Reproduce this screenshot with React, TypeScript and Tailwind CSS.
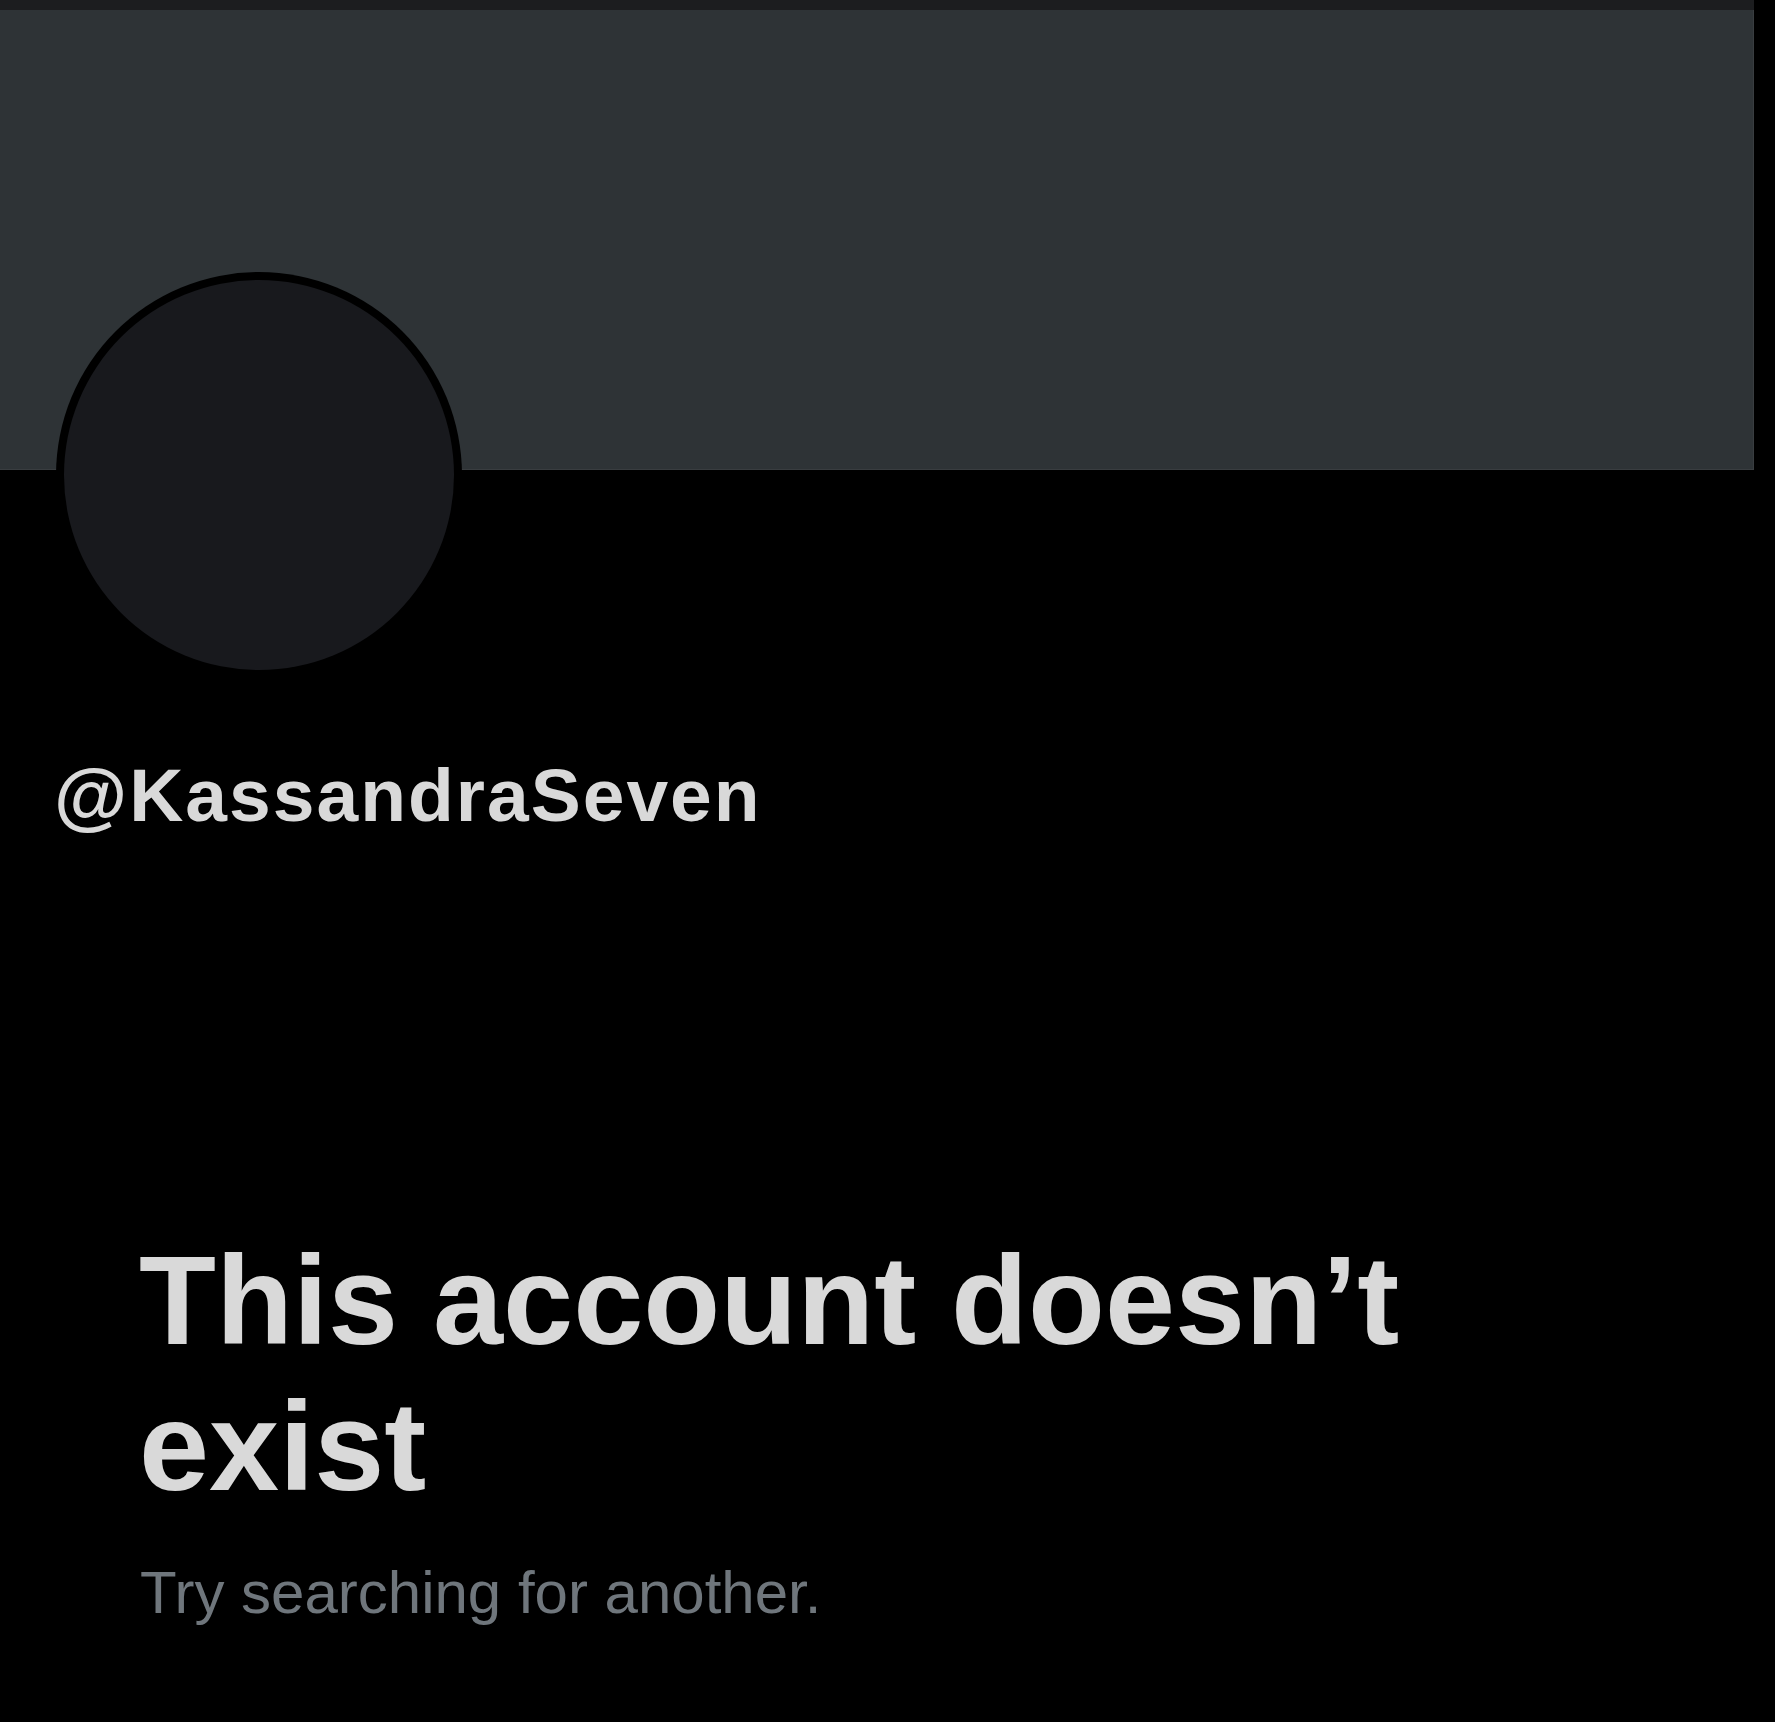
import React from 'react';

const font = { fontFamily: '"Liberation Sans", Arial, sans-serif' };

export default function App() {
  return (
    <div className="min-h-[1722px] bg-black" style={font}>
      <div className="w-[1754px]">
        <div className="h-[10px] bg-[#1c1d1f]" />
        <div className="h-[460px] bg-[#2e3336] border-r border-b border-[#393d40]" />

        <div className="-mt-[198px] ml-[56px] w-[406px] h-[406px] rounded-full bg-black p-[8px]">
          <div className="w-full h-full rounded-full bg-[#18191d]" />
        </div>

        <div className="mt-[80px] pl-[54px] text-[75px] leading-none font-bold tracking-[2px] text-[#d9d9d9]">
          @KassandraSeven
        </div>

        <h1 className="mt-[395px] pl-[139px] w-[1500px] text-[126px] leading-[146px] font-bold text-[#d9d9d9]">
          This account doesn’t exist
        </h1>

        <p className="mt-[43px] pl-[140px] text-[60px] leading-none text-[#6f767c]">
          Try searching for another.
        </p>
      </div>
    </div>
  );
}
